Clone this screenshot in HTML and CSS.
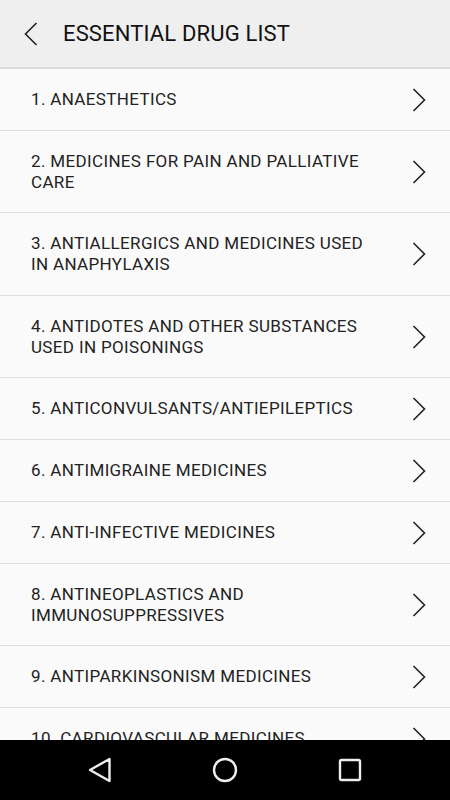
FILE: index.html
```html
<!DOCTYPE html>
<html lang="en">
<head>
    <meta charset="UTF-8">
    <meta name="viewport" content="width=device-width, initial-scale=1.0">
    <title>Essential Drug List</title>
    <link rel="stylesheet" href="styles.css">
</head>
<body>

<div class="screen">
    <div class="toolbar">
        <svg class="back" width="14" height="24" viewBox="0 0 14 24">
            <path d="M12.5 1 L1.5 12 L12.5 23" fill="none" stroke="#222" stroke-width="1.6"/>
        </svg>
        <h1>ESSENTIAL DRUG LIST</h1>
    </div>

    <ul class="list">
        <li class="item"><span>1. ANAESTHETICS</span><svg class="chev" width="14" height="24" viewBox="0 0 14 24"><path d="M1.5 1 L12.5 12 L1.5 23"/></svg></li>
        <li class="item"><span>2. MEDICINES FOR PAIN AND PALLIATIVE CARE</span><svg class="chev" width="14" height="24" viewBox="0 0 14 24"><path d="M1.5 1 L12.5 12 L1.5 23"/></svg></li>
        <li class="item"><span>3. ANTIALLERGICS AND MEDICINES USED IN ANAPHYLAXIS</span><svg class="chev" width="14" height="24" viewBox="0 0 14 24"><path d="M1.5 1 L12.5 12 L1.5 23"/></svg></li>
        <li class="item"><span>4. ANTIDOTES AND OTHER SUBSTANCES USED IN POISONINGS</span><svg class="chev" width="14" height="24" viewBox="0 0 14 24"><path d="M1.5 1 L12.5 12 L1.5 23"/></svg></li>
        <li class="item"><span>5. ANTICONVULSANTS/ANTIEPILEPTICS</span><svg class="chev" width="14" height="24" viewBox="0 0 14 24"><path d="M1.5 1 L12.5 12 L1.5 23"/></svg></li>
        <li class="item"><span>6. ANTIMIGRAINE MEDICINES</span><svg class="chev" width="14" height="24" viewBox="0 0 14 24"><path d="M1.5 1 L12.5 12 L1.5 23"/></svg></li>
        <li class="item"><span>7. ANTI-INFECTIVE MEDICINES</span><svg class="chev" width="14" height="24" viewBox="0 0 14 24"><path d="M1.5 1 L12.5 12 L1.5 23"/></svg></li>
        <li class="item"><span>8. ANTINEOPLASTICS AND IMMUNOSUPPRESSIVES</span><svg class="chev" width="14" height="24" viewBox="0 0 14 24"><path d="M1.5 1 L12.5 12 L1.5 23"/></svg></li>
        <li class="item"><span>9. ANTIPARKINSONISM MEDICINES</span><svg class="chev" width="14" height="24" viewBox="0 0 14 24"><path d="M1.5 1 L12.5 12 L1.5 23"/></svg></li>
        <li class="item"><span>10. CARDIOVASCULAR MEDICINES</span><svg class="chev" width="14" height="24" viewBox="0 0 14 24"><path d="M1.5 1 L12.5 12 L1.5 23"/></svg></li>
    </ul>

    <div class="navbar">
        <svg width="26" height="26" viewBox="0 0 26 26">
            <path d="M22.5 2 L22.5 24 L3 13 Z" fill="none" stroke="#eee" stroke-width="2.4" stroke-linejoin="round"/>
        </svg>
        <svg width="26" height="26" viewBox="0 0 26 26">
            <circle cx="13" cy="13" r="11" fill="none" stroke="#eee" stroke-width="2.4"/>
        </svg>
        <svg width="26" height="26" viewBox="0 0 26 26">
            <rect x="3" y="3" width="20" height="20" rx="1.5" fill="none" stroke="#eee" stroke-width="2.4"/>
        </svg>
    </div>
</div>

</body>
</html>
```

FILE: styles.css
```css
body {
    margin: 0;
    font-family: Roboto, "Liberation Sans", sans-serif;
    background-color: #fafafa;
}
.screen {
    width: 450px;
    height: 800px;
    display: flex;
    flex-direction: column;
    overflow: hidden;
}
.toolbar {
    height: 69px;
    flex-shrink: 0;
    display: flex;
    align-items: center;
    background-color: #efefef;
    border-bottom: 2px solid #dcdcdc;
    box-sizing: border-box;
}
.back {
    margin-left: 24px;
    margin-top: 1px;
}
h1 {
    margin: 0 0 0 25px;
    font-size: 22px;
    font-weight: 400;
    letter-spacing: 0.15px;
    color: #111;
}
.list {
    flex: 1;
    margin: 0;
    padding: 0;
    list-style: none;
    overflow: hidden;
}
.item {
    display: flex;
    align-items: center;
    min-height: 61.8px;
    padding: 20px 0 19.5px 31px;
    box-sizing: border-box;
    border-bottom: 1px solid #dedede;
    font-size: 17px;
    line-height: 21px;
    letter-spacing: 0.35px;
    color: #222;
}
.item span {
    flex: 1;
    padding-right: 40px;
}
.chev {
    margin: -4px 24px -4px 0;
    flex-shrink: 0;
    fill: none;
    stroke: #222;
    stroke-width: 1.6;
}
.navbar {
    height: 60px;
    flex-shrink: 0;
    background-color: #000;
    display: flex;
    align-items: center;
    justify-content: center;
    gap: 99px;
}
```
